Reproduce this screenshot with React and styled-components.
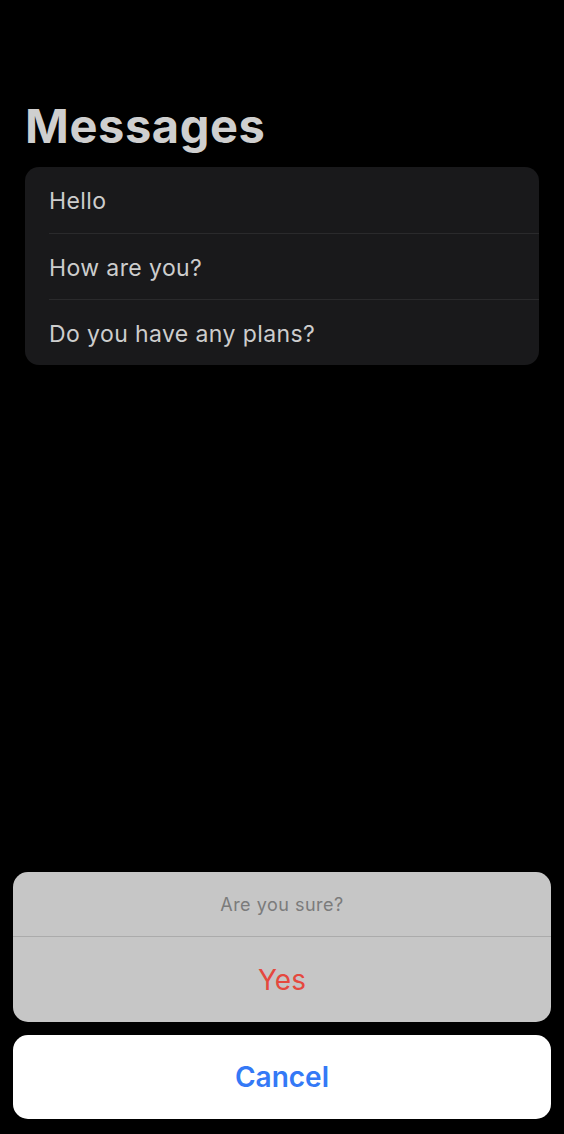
import React from "react";
import styled, { createGlobalStyle } from "styled-components";

const Global = createGlobalStyle`
  html, body { margin: 0; padding: 0; background: #000; }
  body { font-family: Inter, "Liberation Sans", sans-serif; -webkit-font-smoothing: antialiased; }
`;

const Page = styled.div`
  height: 1134px;
  display: flex;
  flex-direction: column;
  background: #000;
  overflow: hidden;
`;

const Content = styled.div`
  flex: 1;
  padding: 95px 25px 0 25px;
  display: flex;
  flex-direction: column;
`;

const Title = styled.h1`
  margin: 0 0 10px 0;
  font-size: 47px;
  line-height: 62px;
  font-weight: 700;
  color: #cfcfcf;
  letter-spacing: 0.6px;
`;

const List = styled.div`
  background: #19191b;
  border-radius: 14px;
  overflow: hidden;
`;

const Row = styled.div`
  height: 66px;
  margin-left: 24px;
  padding-top: 2px;
  display: flex;
  align-items: center;
  font-size: 23px;
  letter-spacing: 0.4px;
  color: #cdcdcd;
  border-top: ${(p) => (p.$first ? "none" : "1px solid #2a2a2c")};
  box-sizing: border-box;
`;

const Sheet = styled.div`
  padding: 0 13px 15px 13px;
  display: flex;
  flex-direction: column;
  gap: 13px;
`;

const Group = styled.div`
  background: #c6c6c6;
  border-radius: 15px;
  overflow: hidden;
  display: flex;
  flex-direction: column;
`;

const SheetTitle = styled.div`
  height: 65px;
  display: flex;
  align-items: center;
  justify-content: center;
  font-size: 18px;
  letter-spacing: 0.5px;
  color: #7b7b7b;
  border-bottom: 1px solid #ababab;
  box-sizing: border-box;
`;

const Action = styled.div`
  height: ${(p) => p.$h}px;
  display: flex;
  align-items: center;
  justify-content: center;
  font-size: 28px;
  font-weight: ${(p) => (p.$bold ? 600 : 400)};
  color: ${(p) => p.$color};
`;

const CancelBox = styled.div`
  background: #fff;
  border-radius: 15px;
`;

export default function App() {
  const messages = ["Hello", "How are you?", "Do you have any plans?"];
  return (
    <Page>
      <Global />
      <Content>
        <Title>Messages</Title>
        <List>
          {messages.map((m, i) => (
            <Row key={m} $first={i === 0}>
              {m}
            </Row>
          ))}
        </List>
      </Content>
      <Sheet>
        <Group>
          <SheetTitle>Are you sure?</SheetTitle>
          <Action $h={85} $color="#e5493e">Yes</Action>
        </Group>
        <CancelBox>
          <Action $h={84} $bold $color="#3479f6">Cancel</Action>
        </CancelBox>
      </Sheet>
    </Page>
  );
}
